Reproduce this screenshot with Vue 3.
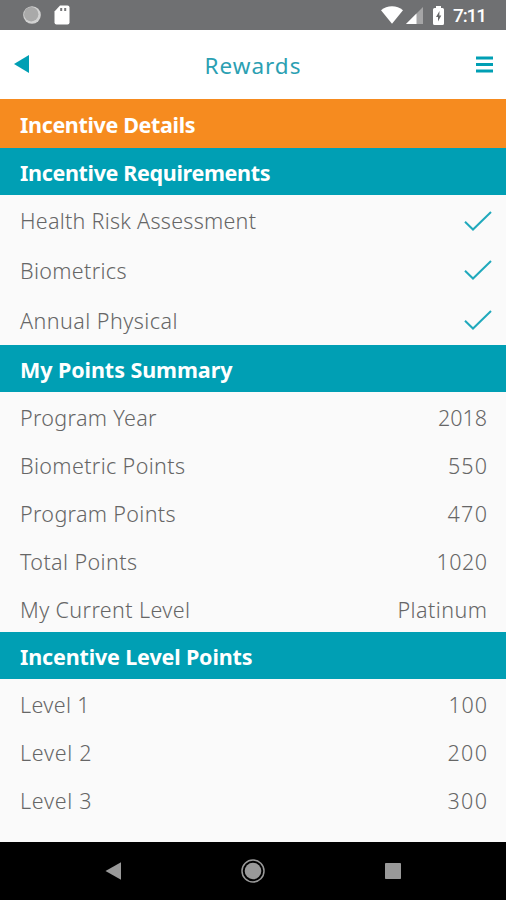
<script setup>
const sections = [
  {
    title: 'Incentive Requirements', width: 250.5, kind: 'checks',
    rows: [
      { label: 'Health Risk Assessment', width: 236 },
      { label: 'Biometrics', width: 106.5 },
      { label: 'Annual Physical', width: 157.5 },
    ],
  },
  {
    title: 'My Points Summary', width: 212.5, kind: 'values',
    rows: [
      { label: 'Program Year', width: 136.5, value: '2018', valueWidth: 49 },
      { label: 'Biometric Points', width: 165, value: '550', valueWidth: 39 },
      { label: 'Program Points', width: 155.5, value: '470', valueWidth: 39.5 },
      { label: 'Total Points', width: 117, value: '1020', valueWidth: 50.5 },
      { label: 'My Current Level', width: 170, value: 'Platinum', valueWidth: 89.5 },
    ],
  },
  {
    title: 'Incentive Level Points', width: 232.5, kind: 'values levels',
    rows: [
      { label: 'Level 1', width: 69.5, value: '100', valueWidth: 38.5 },
      { label: 'Level 2', width: 71.5, value: '200', valueWidth: 39.5 },
      { label: 'Level 3', width: 71.5, value: '300', valueWidth: 39.5 },
      { label: 'Level 4', width: 71.5, value: '400', valueWidth: 39.5 },
    ],
  },
]

// Tracks a label evenly so that it spans the given width.
const vTrack = {
  mounted(el, { value }) {
    const gaps = el.textContent.length - 1
    const spacing = (value - el.getBoundingClientRect().width) / gaps
    el.style.letterSpacing = `${spacing}px`
    el.style.marginRight = `${-spacing}px`
  },
}
</script>

<template>
  <div class="screen">
    <div class="status">
      <svg class="sync" viewBox="0 0 20 20">
        <circle cx="10" cy="10" r="8.8" fill="#d2d2d2" />
        <circle cx="9.2" cy="9.2" r="7.2" fill="#a9a9a9" />
      </svg>
      <svg class="card" viewBox="0 0 16 20">
        <path d="M6 .5h7.5a2 2 0 0 1 2 2v15a2 2 0 0 1-2 2h-11a2 2 0 0 1-2-2V6.5z" fill="#fff" />
        <path d="M7.2 3v3M11.2 3v3" stroke="#77787a" stroke-width="2" />
      </svg>
      <span class="spacer"></span>
      <svg class="wifi" viewBox="0 0 22 18">
        <path d="M0 4.2C6-1.2 16-1.2 22 4.2L11 17.8z" fill="#fff" />
      </svg>
      <svg class="signal" viewBox="0 0 17 17">
        <path d="M0 17L17 0v17z" fill="#a5a5a6" />
        <path d="M0 17L10.5 6.5V17z" fill="#fff" />
      </svg>
      <svg class="battery" viewBox="0 0 11 19">
        <path d="M3 0h5v2h1.5A1.5 1.5 0 0 1 11 3.5v14A1.5 1.5 0 0 1 9.5 19h-8A1.5 1.5 0 0 1 0 17.5v-14A1.5 1.5 0 0 1 1.5 2H3z" fill="#fff" />
        <path d="M6.5 5L3 11h2v4.5L8.3 9.5H6.3z" fill="#666769" />
      </svg>
      <span class="clock" v-track="34">7:11</span>
    </div>

    <header class="bar">
      <svg class="back" viewBox="0 0 15 18"><path d="M0 9L15 0v18z" fill="#009fb4" /></svg>
      <h1 class="title"><span class="text" v-track="96">Rewards</span></h1>
      <svg class="menu" viewBox="0 0 17 17">
        <path d="M0 2h17M0 8.5h17M0 15h17" stroke="#009fb4" stroke-width="3.2" />
      </svg>
    </header>

    <main class="content">
      <h2 class="band orange"><span class="text" v-track="175.5">Incentive Details</span></h2>
      <section v-for="s in sections" :key="s.title">
        <h2 class="band"><span class="text" v-track="s.width">{{ s.title }}</span></h2>
        <div v-for="r in s.rows" :key="r.label" class="row" :class="s.kind">
          <span class="text" v-track="r.width">{{ r.label }}</span>
          <svg v-if="s.kind === 'checks'" class="check" viewBox="0 0 28 20">
            <path d="M1 10.8L9 18.5L27 1" fill="none" stroke="#20a9bc" stroke-width="2" />
          </svg>
          <span v-else class="text" v-track="r.valueWidth">{{ r.value }}</span>
        </div>
      </section>
    </main>

    <nav class="nav">
      <svg viewBox="0 0 24 24"><path d="M4.5 12L20 3.3v17.4z" fill="#999" /></svg>
      <svg viewBox="0 0 24 24">
        <circle cx="12" cy="12" r="11" fill="none" stroke="#999" stroke-width="1.5" />
        <circle cx="12" cy="12" r="8.3" fill="#999" />
      </svg>
      <svg viewBox="0 0 24 24"><rect x="4" y="4" width="16" height="16" rx=".8" fill="#999" /></svg>
    </nav>
  </div>
</template>

<style>
body { background: #fafafa; }
</style>

<style scoped>
.screen {
  height: 900px;
  display: flex;
  flex-direction: column;
  overflow: hidden;
  background: #fafafa;
  font-family: "Noto Sans", sans-serif;
}
svg { display: block; flex: none; }
.text { white-space: nowrap; }
.status {
  flex: none;
  box-sizing: border-box;
  height: 29.5px;
  display: flex;
  align-items: center;
  padding: 1px 19px 0 22px;
  background: #6f7072;
}
.sync { width: 20px; height: 20px; }
.card { width: 16px; height: 20px; margin-left: 12px; }
.spacer { flex: 1; }
.wifi { width: 22px; height: 18px; }
.signal { width: 17px; height: 17px; margin-left: 3px; }
.battery { width: 11px; height: 19px; margin-left: 10px; }
.clock {
  margin-left: 9px;
  padding-top: 1px;
  color: #fff;
  font: 500 19px/28px Roboto, sans-serif;
}
.bar {
  flex: none;
  height: 69px;
  box-sizing: border-box;
  display: flex;
  align-items: center;
  justify-content: space-between;
  padding: 0 13px 0 14px;
  background: #fff;
}
.back { width: 15px; height: 18px; }
.menu { width: 17px; height: 17px; }
.title {
  margin: 0;
  padding-top: 2px;
  color: #2ba0b2;
  font-size: 22.5px;
  font-weight: 400;
}
.content { flex: 1; min-height: 0; overflow: hidden; }
.band {
  height: 47.6px;
  margin: 0;
  padding: 2px 20px 0;
  box-sizing: border-box;
  display: flex;
  align-items: center;
  background: #009fb4;
  color: #fff;
  font-size: 21.5px;
  font-weight: 700;
}
.orange { height: 49.3px; padding-top: 2px; background: #f68b1f; }
.row {
  box-sizing: border-box;
  display: flex;
  align-items: center;
  justify-content: space-between;
  color: #666;
  font-size: 21.5px;
  font-weight: 300;
}
.values { height: 47.85px; padding: 3px 19px 0 20px; }
.levels:last-child { padding-top: 5px; }
.checks { height: 49.8px; padding: .8px 14.5px 0 20px; }
.check { width: 28px; height: 20px; }
.nav {
  flex: none;
  height: 58px;
  display: flex;
  align-items: center;
  justify-content: center;
  gap: 116px;
  background: #000;
}
.nav svg { width: 24px; height: 24px; }
</style>
